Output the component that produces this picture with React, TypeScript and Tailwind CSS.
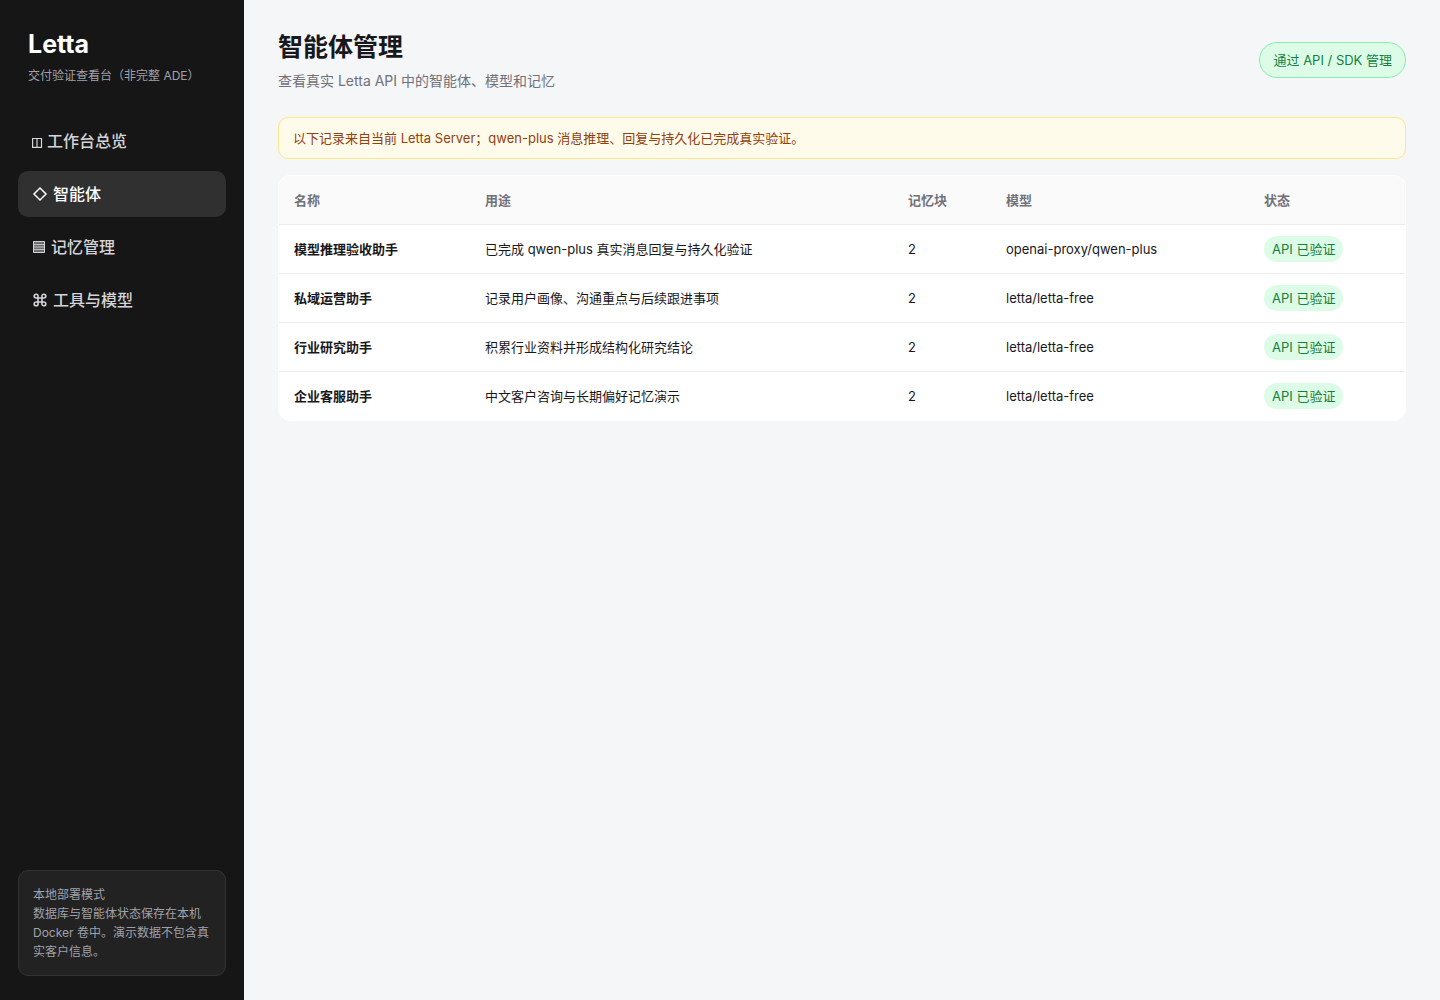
import type { ReactNode } from 'react';

const navItems: { label: string; active?: boolean; icon: ReactNode }[] = [
  {
    label: '工作台总览',
    icon: (
      <svg className="mt-1 mr-1 h-3 w-[11px]" viewBox="0 0 11 12" fill="none" stroke="currentColor" strokeWidth={1.2} aria-hidden="true">
        <path d="M.6 1.5h8.9v8.9H.6zM5 1.5v8.9" />
      </svg>
    ),
  },
  {
    label: '智能体',
    active: true,
    icon: (
      <svg className="mr-1 h-4 w-[17px]" viewBox="0 0 17 16" fill="none" stroke="currentColor" strokeWidth={1.5} aria-hidden="true">
        <path d="M8 2l6 6-6 6-6-6z" />
      </svg>
    ),
  },
  {
    label: '记忆管理',
    icon: (
      <svg className="mr-1 h-4 w-[15px]" viewBox="0 0 15 16" fill="none" stroke="currentColor" aria-hidden="true">
        <path d="M1.5 2.5h11v11h-11z" fill="currentColor" fillOpacity={0.45} />
        <path d="M2 5.5h10M2 8h10M2 10.5h10" strokeOpacity={0.8} />
      </svg>
    ),
  },
  {
    label: '工具与模型',
    icon: (
      <svg className="mr-1 h-4 w-[17px]" viewBox="0 0 17 16" fill="none" stroke="currentColor" strokeWidth={1.6} aria-hidden="true">
        <path d="M6 6V4.1A1.9 1.9 0 1 0 4.1 6h7.8A1.9 1.9 0 1 0 10 4.1v7.8a1.9 1.9 0 1 0 1.9-1.9H4.1A1.9 1.9 0 1 0 6 11.9z" />
      </svg>
    ),
  },
];

const agents = [
  { name: '模型推理验收助手', purpose: '已完成 qwen-plus 真实消息回复与持久化验证', blocks: 2, model: 'openai-proxy/qwen-plus' },
  { name: '私域运营助手', purpose: '记录用户画像、沟通重点与后续跟进事项', blocks: 2, model: 'letta/letta-free' },
  { name: '行业研究助手', purpose: '积累行业资料并形成结构化研究结论', blocks: 2, model: 'letta/letta-free' },
  { name: '企业客服助手', purpose: '中文客户咨询与长期偏好记忆演示', blocks: 2, model: 'letta/letta-free' },
];

function Sidebar() {
  return (
    <aside className="flex w-[244px] shrink-0 flex-col bg-[#161616] px-[18px] pt-7 pb-6">
      <div className="px-[10px]">
        <div className="text-[25px] leading-8 font-bold text-white">Letta</div>
        <p className="mt-1 text-xs leading-6 text-[#a1a1aa]">交付验证查看台（非完整 ADE）</p>
      </div>
      <nav className="mt-[30px] flex flex-col gap-[7px]">
        {navItems.map((item) => (
          <a
            key={item.label}
            href="#"
            aria-current={item.active ? 'page' : undefined}
            className={`flex h-[46px] items-center rounded-[10px] px-[14px] text-base font-medium ${item.active ? 'bg-[#303030] text-white' : 'text-[#d4d4d8]'
              }`}
          >
            {item.icon}
            {item.label}
          </a>
        ))}
      </nav>
      <div className="mt-auto rounded-[10px] border border-[#333] bg-[#222] p-[14px] text-xs leading-[19px] text-[#a1a1aa]">
        本地部署模式
        <br />
        数据库与智能体状态保存在本机 Docker 卷中。演示数据不包含真实客户信息。
      </div>
    </aside>
  );
}

function AgentTable() {
  return (
    <div className="mt-4 overflow-hidden rounded-xl border border-white bg-white">
      <table className="w-full table-fixed border-separate border-spacing-0 text-left text-[13px] leading-5 text-[#18181b]">
        <colgroup>
          <col className="w-[191px]" />
          <col className="w-[423px]" />
          <col className="w-[98px]" />
          <col className="w-[258px]" />
          <col className="w-[156px]" />
        </colgroup>
        <thead>
          <tr className="h-[49px] bg-[#fafafa] text-[#71717a] *:border-b *:border-[#ececee]">
            {['名称', '用途', '记忆块', '模型', '状态'].map((head) => (
              <th key={head} scope="col" className="px-[15px] font-semibold">
                {head}
              </th>
            ))}
          </tr>
        </thead>
        <tbody>
          {agents.map((agent) => (
            <tr key={agent.name} className="h-[49px] *:border-b *:border-[#ececee] last:h-12 last:*:border-b-0">
              <td className="px-[15px] font-bold">{agent.name}</td>
              <td className="px-[15px]">{agent.purpose}</td>
              <td className="px-[15px]">{agent.blocks}</td>
              <td className="px-[15px]">{agent.model}</td>
              <td className="px-[15px]">
                <span className="inline-block rounded-full bg-[#dcfce7] px-2 py-[3px] align-middle whitespace-nowrap text-[#15803d]">
                  API 已验证
                </span>
              </td>
            </tr>
          ))}
        </tbody>
      </table>
    </div>
  );
}

export default function App() {
  return (
    <div className="flex min-h-screen bg-[#f4f6f8] font-[Inter,'Noto_Sans_CJK_SC',sans-serif] text-[#18181b]">
      <Sidebar />
      <main className="min-w-0 flex-1 px-[34px] py-7">
        <header className="flex items-center justify-between">
          <div>
            <h1 className="text-[25px] leading-[38px] font-bold">智能体管理</h1>
            <p className="mt-1 text-sm leading-[22px] text-[#71717a]">查看真实 Letta API 中的智能体、模型和记忆</p>
          </div>
          <span className="rounded-full border border-[#86efac] bg-[#dcfce7] px-[13px] py-[7px] text-[13px] leading-5 whitespace-nowrap text-[#15803d]">
            通过 API / SDK 管理
          </span>
        </header>
        <div className="mt-[25px] rounded-[10px] border border-[#fde68a] bg-[#fffbeb] px-[14px] py-[10px] text-[13px] leading-5 text-[#92400e]">
          以下记录来自当前 Letta Server；qwen-plus 消息推理、回复与持久化已完成真实验证。
        </div>
        <AgentTable />
      </main>
    </div>
  );
}
